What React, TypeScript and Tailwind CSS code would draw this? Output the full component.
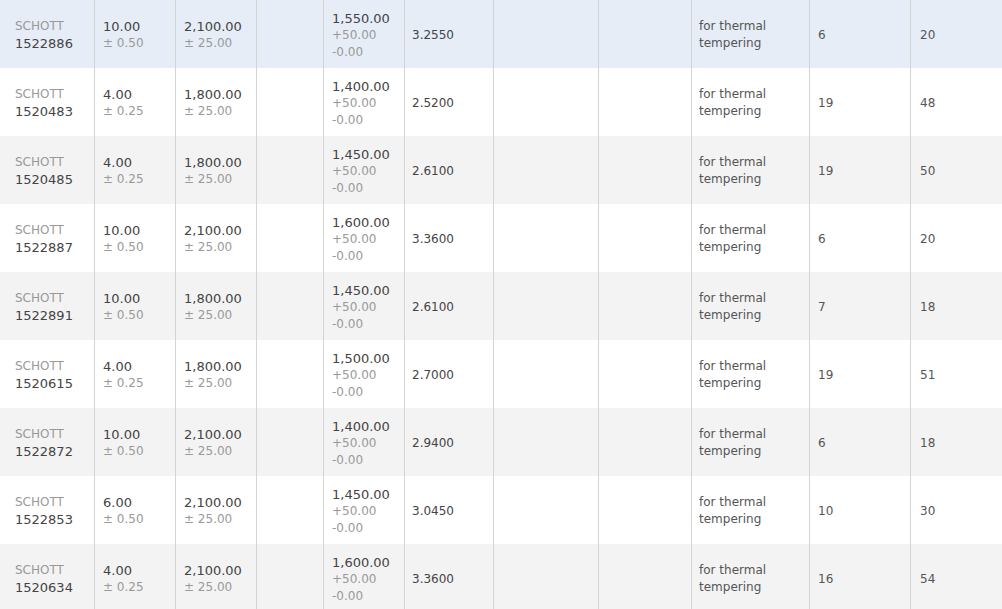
import React from "react";

type Row = {
  id: string;
  thick: string;
  thickTol: string;
  w: string;
  l: string;
  price: string;
  a: string;
  b: string;
};

const rows: Row[] = [
  { id: "1522886", thick: "10.00", thickTol: "± 0.50", w: "2,100.00", l: "1,550.00", price: "3.2550", a: "6", b: "20" },
  { id: "1520483", thick: "4.00", thickTol: "± 0.25", w: "1,800.00", l: "1,400.00", price: "2.5200", a: "19", b: "48" },
  { id: "1520485", thick: "4.00", thickTol: "± 0.25", w: "1,800.00", l: "1,450.00", price: "2.6100", a: "19", b: "50" },
  { id: "1522887", thick: "10.00", thickTol: "± 0.50", w: "2,100.00", l: "1,600.00", price: "3.3600", a: "6", b: "20" },
  { id: "1522891", thick: "10.00", thickTol: "± 0.50", w: "1,800.00", l: "1,450.00", price: "2.6100", a: "7", b: "18" },
  { id: "1520615", thick: "4.00", thickTol: "± 0.25", w: "1,800.00", l: "1,500.00", price: "2.7000", a: "19", b: "51" },
  { id: "1522872", thick: "10.00", thickTol: "± 0.50", w: "2,100.00", l: "1,400.00", price: "2.9400", a: "6", b: "18" },
  { id: "1522853", thick: "6.00", thickTol: "± 0.50", w: "2,100.00", l: "1,450.00", price: "3.0450", a: "10", b: "30" },
  { id: "1520634", thick: "4.00", thickTol: "± 0.25", w: "2,100.00", l: "1,600.00", price: "3.3600", a: "16", b: "54" },
];

const cell = "h-full shrink-0 border-r border-[#d4d4d4] flex flex-col justify-center pt-[2px]";

export default function App() {
  return (
    <div
      className="w-[1002px] h-[609px] overflow-hidden bg-white"
      style={{ fontFamily: '"DejaVu Sans", Verdana, sans-serif' }}
    >
      {rows.map((r, i) => {
        const bg = i === 0 ? "bg-[#e6edf7]" : i % 2 === 1 ? "bg-white" : "bg-[#f3f3f3]";
        return (
          <div key={r.id} className={`flex h-[68px] ${bg}`}>
            <div className={`${cell} w-[95px] pl-[15px] leading-[17px]`}>
              <span className="text-[12px] text-[#999999]">SCHOTT</span>
              <span className="text-[13px] text-[#444444]">{r.id}</span>
            </div>
            <div className={`${cell} w-[81px] pl-[8px] leading-[17px]`}>
              <span className="text-[13px] text-[#444444]">{r.thick}</span>
              <span className="text-[12px] text-[#999999]">{r.thickTol}</span>
            </div>
            <div className={`${cell} w-[81px] pl-[8px] leading-[17px]`}>
              <span className="text-[13px] text-[#444444]">{r.w}</span>
              <span className="text-[12px] text-[#999999]">± 25.00</span>
            </div>
            <div className={`${cell} w-[67px]`} />
            <div className={`${cell} w-[81px] pl-[8px] leading-[17px]`}>
              <span className="text-[13px] text-[#444444]">{r.l}</span>
              <span className="text-[12px] text-[#999999]">+50.00</span>
              <span className="text-[12px] text-[#999999]">-0.00</span>
            </div>
            <div className={`${cell} w-[89px] pl-[7px] leading-[17px]`}>
              <span className="text-[12px] text-[#444444]">{r.price}</span>
            </div>
            <div className={`${cell} w-[105px]`} />
            <div className={`${cell} w-[93px]`} />
            <div className={`${cell} w-[118px] pl-[7px] leading-[17px]`}>
              <span className="text-[12px] text-[#555555]">for thermal</span>
              <span className="text-[12px] text-[#555555]">tempering</span>
            </div>
            <div className={`${cell} w-[101px] pl-[8px] leading-[17px]`}>
              <span className="text-[12px] text-[#555555]">{r.a}</span>
            </div>
            <div className="h-full flex-1 flex flex-col justify-center pt-[2px] pl-[9px] leading-[17px]">
              <span className="text-[12px] text-[#555555]">{r.b}</span>
            </div>
          </div>
        );
      })}
    </div>
  );
}
